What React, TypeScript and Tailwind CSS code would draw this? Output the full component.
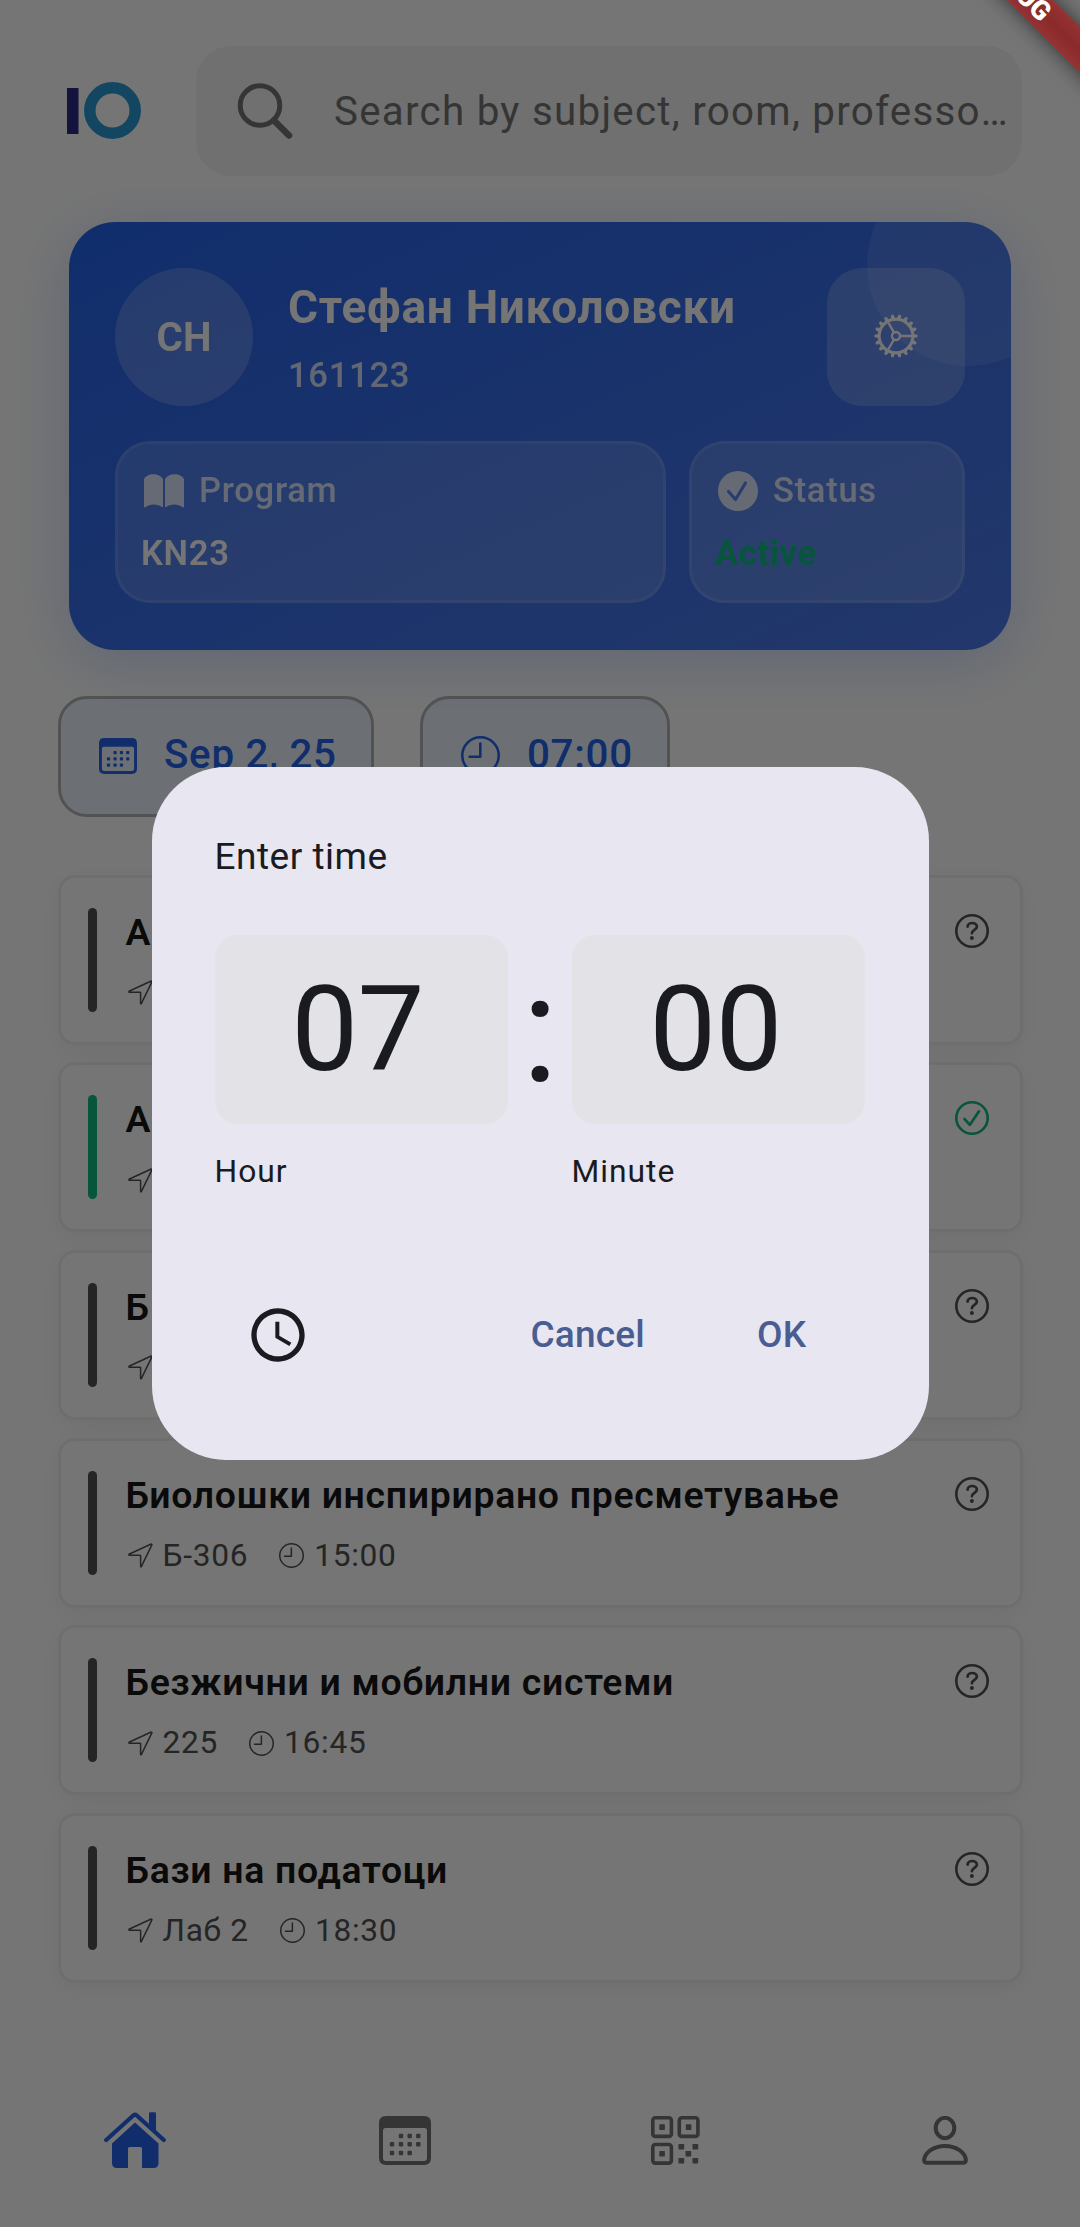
import React from "react";
import { MdOutlineAccessTime } from "react-icons/md";

type IconProps = { className?: string };

const ClockIcon = ({ className, stroke = 1.2 }: IconProps & { stroke?: number }) => (
  <svg viewBox="0 0 20 20" fill="none" stroke="currentColor" strokeWidth={stroke} className={className}>
    <circle cx="10" cy="10" r={10 - stroke / 2} />
    <path d="M9.9 3.9V10.6H4.4" strokeLinecap="round" strokeLinejoin="round" />
  </svg>
);

const ArrowIcon = ({ className }: IconProps) => (
  <svg viewBox="0 0 25 25" fill="none" stroke="currentColor" strokeWidth="1.500" strokeLinejoin="round" className={className}>
    <path d="M1 11.300 23.200 1 24 1.600 13.200 23.800 12.600 23.800V12.600L12.200 12.200H1Z" />
  </svg>
);

const CalendarIcon = ({ className }: IconProps) => (
  <svg viewBox="0 0 52 49" fill="currentColor" className={className}>
    <path
      fillRule="evenodd"
      d="M7 0H45Q52 0 52 7V42Q52 49 45 49H7Q0 49 0 42V7Q0 0 7 0ZM6.500 12Q4 12 4 14.500V42Q4 45 7 45H45Q48 45 48 42V14.500Q48 12 45.500 12Z"
    />
    {[
      [20, 18], [28.7, 18], [37.3, 18],
      [11, 26.3], [20, 26.3], [28.7, 26.3], [37.3, 26.3],
      [11, 35], [20, 35], [28.7, 35],
    ].map(([x, y]) => (
      <rect key={`${x}-${y}`} x={x - 0.2} y={y - 0.2} width="4.400" height="4.400" rx="1" />
    ))}
  </svg>
);

const GearIcon = ({ className }: IconProps) => (
  <svg viewBox="-22 -22 44 44" fill="none" stroke="currentColor" className={className}>
    <circle r="16.800" strokeWidth="2.900" />
    <circle r="4" strokeWidth="2.400" />
    {[0, 120, 240].map((a) => (
      <path key={a} d="M4.500 0H17" strokeWidth="2.300" transform={`rotate(${a})`} />
    ))}
    {Array.from({ length: 18 }, (_, i) => (
      <path key={i} d="M17.500 -2.300 21.600 -1.100V1.100L17.500 2.300Z" fill="currentColor" stroke="none" transform={`rotate(${i * 20})`} />
    ))}
  </svg>
);

const HomeIcon = ({ className }: IconProps) => (
  <svg viewBox="0 0 62 56" fill="currentColor" className={className}>
    <path d="M2.200 28 29.200 3.500Q31 2 32.800 3.500L59.800 28" fill="none" stroke="currentColor" strokeWidth="4.200" strokeLinecap="round" />
    <path d="M45 12V1.500Q45 .2 46.300 .2H50.700Q52 .2 52 1.500V20Z" />
    <path d="M31 10.500 54.500 31.500V51Q54.500 56 49.500 56H38V36.500Q38 35 36.500 35H25.500Q24 35 24 36.500V56H13Q8 56 8 51V31.500Z" />
  </svg>
);

const QrIcon = ({ className }: IconProps) => (
  <svg viewBox="0 0 49 49" fill="currentColor" className={className}>
    {[[0, 0], [26.5, 0], [0, 26.7]].map(([x, y]) => (
      <g key={`${x}-${y}`}>
        <rect x={x + 1.8} y={y + 1.8} width="18.600" height="18.600" rx="2.500" fill="none" stroke="currentColor" strokeWidth="3.600" />
        <rect x={x + 8.3} y={y + 8.3} width="5.600" height="5.600" rx=".6" />
      </g>
    ))}
    {[[27.5, 28], [41.5, 28], [34.5, 35], [27.5, 42], [41.5, 42]].map(([x, y]) => (
      <rect key={`${x}-${y}`} x={x} y={y} width="5.700" height="5.400" rx=".6" />
    ))}
  </svg>
);

const PersonIcon = ({ className }: IconProps) => (
  <svg viewBox="0 0 46 49" fill="none" stroke="currentColor" strokeWidth="4" className={className}>
    <ellipse cx="23" cy="12" rx="9.300" ry="10.200" />
    <path d="M5 46.800H41Q44 46.800 43.900 44C43 36.500 34.500 30 23 30S3 36.500 2.100 44Q2 46.800 5 46.800Z" />
  </svg>
);

const QuestionIcon = ({ className }: IconProps) => (
  <svg viewBox="0 0 34 34" fill="none" stroke="currentColor" strokeLinecap="round" strokeLinejoin="round" className={className}>
    <circle cx="17" cy="17" r="15.700" strokeWidth="2.600" />
    <path d="M12.600 12.600C12.900 7.800 22 7.800 21.900 12.800C21.800 15.800 16.900 16 16.900 19.200" strokeWidth="2.700" />
    <circle cx="16.900" cy="23.900" r="2" fill="currentColor" stroke="none" />
  </svg>
);

const CheckIcon = ({ className }: IconProps) => (
  <svg viewBox="0 0 34 34" fill="none" stroke="currentColor" strokeLinecap="round" strokeLinejoin="round" className={className}>
    <circle cx="17" cy="17" r="15.700" strokeWidth="2.600" />
    <path d="M9.500 18 14.900 23.800 24 10.300" strokeWidth="2.700" />
  </svg>
);

const CheckFilledIcon = ({ className }: IconProps) => (
  <svg viewBox="0 0 40 40" fill="currentColor" className={className}>
    <mask id="check-cut">
      <rect width="40" height="40" fill="white" />
      <path d="M10.500 20.500 17.500 28.500 27.500 12" fill="none" stroke="black" strokeWidth="3.200" strokeLinecap="round" strokeLinejoin="round" />
    </mask>
    <circle cx="20" cy="20" r="20" mask="url(#check-cut)" />
  </svg>
);

const BookIcon = ({ className }: IconProps) => (
  <svg viewBox="0 0 40 34" fill="currentColor" className={className}>
    <path d="M0 5C3-1.500 15.500-1.500 19 5V32.500Q19 33.800 18 33C14 29.500 5.500 29.500 1.800 33Q0 34 0 32.500Z" />
    <path d="M21 5C24.500-1.500 37-1.500 40 5V32.500Q40 34 38.200 33C34.500 29.500 26 29.500 22 33Q21 33.800 21 32.500Z" />
  </svg>
);

type Slot = { title: string; room: string; time: string; booked?: boolean };

const slots: Slot[] = [
  { title: "А", room: "", time: "" },
  { title: "А", room: "", time: "", booked: true },
  { title: "Б", room: "", time: "" },
  { title: "Биолошки инспирирано пресметување", room: "Б-306", time: "15:00" },
  { title: "Безжични и мобилни системи", room: "225", time: "16:45" },
  { title: "Бази на податоци", room: "Лаб 2", time: "18:30" },
];

const SlotCard = ({ slot }: { slot: Slot }) => (
  <div className="flex h-[170px] shrink-0 items-center rounded-[17px] border-[3px] border-[#efefef] bg-white pr-[31px] pl-[27px] shadow-[0_6px_23px_rgba(0,0,0,0.05)]">
    <div className={`h-[104px] w-[9px] rounded-full ${slot.booked ? "bg-[#10b981]" : "bg-[#525252]"}`} />
    <div className="ml-[29px] flex h-[104px] flex-1 flex-col">
      <div className="h-[48px] text-[37.400px] leading-[48px] font-semibold tracking-[0.700px] whitespace-nowrap text-[#171717]">{slot.title}</div>
      <div className="mt-[18px] flex h-[38px] items-center text-[31.700px] leading-[38px] tracking-[0.700px] text-[#525252]">
        <ArrowIcon className="ml-[2px] h-[25px] w-[25px]" />
        {slot.room && <span className="ml-[10px]">{slot.room}</span>}
        {slot.time && <ClockIcon className="ml-[31px] h-[25px] w-[25px]" />}
        <span className="ml-[10px]">{slot.time}</span>
      </div>
    </div>
    {slot.booked ? (
      <CheckIcon className="mb-[58px] h-[34px] w-[34px] text-[#10b981]" />
    ) : (
      <QuestionIcon className="mb-[58px] h-[34px] w-[34px] text-[#525252]" />
    )}
  </div>
);

const ProfileCard = () => (
  <section className="relative mx-[69px] mt-[46px] h-[428px] overflow-hidden rounded-[46px] bg-linear-to-br from-[#2563eb] to-[#4b7aea] p-[46px] text-white">
    <div className="absolute -top-[58px] -right-[58px] h-[202px] w-[202px] rounded-full bg-white/10" />
    <div className="relative flex h-[138px]">
      <div className="flex h-[138px] w-[138px] items-center justify-center rounded-full bg-white/20 pt-[2px] text-[40.300px] font-bold">СН</div>
      <div className="ml-[35px] flex flex-1 flex-col pt-[10px]">
        <div className="h-[58px] text-[46px] leading-[58px] font-bold tracking-[0.720px] whitespace-nowrap">Стефан Николовски</div>
        <div className="mt-[17px] h-[44px] text-[34.600px] leading-[44px] font-medium tracking-[0.700px] text-white/80">161123</div>
      </div>
      <div className="flex h-[138px] w-[138px] items-center justify-center rounded-[35px] bg-white/20 pb-[2px]">
        <GearIcon className="h-[44px] w-[44px]" />
      </div>
    </div>
    <div className="relative mt-[35px] flex gap-[23px]">
      <div className="h-[162px] w-[551px] rounded-[35px] border-[3px] border-white/10 bg-white/15 pt-[25px] pl-[23px]">
        <div className="flex h-[44px] items-center text-[34.600px] font-medium tracking-[0.700px] text-white/80">
          <BookIcon className="ml-[3px] h-[34px] w-[40px]" />
          <span className="ml-[15px]">Program</span>
        </div>
        <div className="mt-[18px] text-[34.600px] leading-[44px] font-semibold tracking-[0.700px]">KN23</div>
      </div>
      <div className="h-[162px] flex-1 rounded-[35px] border-[3px] border-white/10 bg-white/15 pt-[25px] pl-[23px]">
        <div className="flex h-[44px] items-center text-[34.600px] font-medium tracking-[0.700px] text-white/80">
          <CheckFilledIcon className="ml-[3px] h-[40px] w-[40px]" />
          <span className="ml-[15px]">Status</span>
        </div>
        <div className="mt-[18px] text-[34.600px] leading-[44px] font-bold tracking-[0.600px] text-[#10b981]">Active</div>
      </div>
    </div>
  </section>
);

const TimeDialog = () => (
  <div className="flex h-[693px] w-[777px] flex-col rounded-[74px] bg-[#e8e6f0] px-[63px] pt-[69px] text-[#1a1b20]">
    <div className="h-[42px] text-[37px] leading-[42px] tracking-[0.500px]">Enter time</div>
    <div className="mt-[57px] flex h-[189px] items-center justify-between">
      <div className="flex h-[189px] w-[293px] items-center justify-center rounded-[23px] bg-[#e3e2e6] pr-[7px] text-[119.200px] tracking-[-0.700px]">07</div>
      <div className="text-[151px] leading-[189px]">:</div>
      <div className="flex h-[189px] w-[293px] items-center justify-center rounded-[23px] bg-[#e3e2e6] pr-[7px] text-[119.200px] tracking-[-0.700px]">00</div>
    </div>
    <div className="mt-[26px] grid grid-cols-[357px_1fr] text-[31.800px] leading-[42px] tracking-[1px]">
      <span>Hour</span>
      <span>Minute</span>
    </div>
    <div className="mt-[111px] flex h-[64px] items-center text-[37px] font-medium tracking-[0.200px] text-[#495d92]">
      <MdOutlineAccessTime className="ml-[31px] h-[64px] w-[64px] text-[#1a1b20]" />
      <span className="ml-[221px]">Cancel</span>
      <span className="ml-[112px]">OK</span>
    </div>
  </div>
);

export default function App() {
  return (
    <div className="relative flex h-[2227px] w-[1080px] flex-col overflow-hidden bg-white font-['Roboto','Noto_Sans',sans-serif]">
      <header className="flex h-[176px] shrink-0 items-end pr-[58px] pl-[67px]">
        <svg viewBox="0 0 75 130" className="h-[130px] w-[75px]">
          <rect x="0" y="42" width="11.500" height="46" fill="#2b2a86" />
          <circle cx="45.500" cy="64.500" r="22.700" fill="none" stroke="#2999d3" strokeWidth="11.500" />
        </svg>
        <div className="ml-[54px] flex h-[130px] flex-1 items-center rounded-[35px] bg-[#f5f5f5] pl-[41px] text-[#737373]">
          <svg viewBox="0 0 56 56" fill="none" stroke="currentColor" className="h-[56px] w-[56px] shrink-0">
            <circle cx="23" cy="22.500" r="19.800" strokeWidth="5" />
            <path d="M37 37.500 52 52.500" strokeWidth="6.500" strokeLinecap="round" />
          </svg>
          <span className="mt-[2px] ml-[41px] text-[40.300px] tracking-[1.270px] whitespace-nowrap">Search by subject, room, professo…</span>
        </div>
      </header>
      <div className="shrink-0 drop-shadow-[0_12px_29px_rgba(37,99,235,0.22)]">
        <ProfileCard />
      </div>
      <div className="mt-[46px] flex shrink-0 gap-[46px] pl-[58px] text-[40.300px] font-medium tracking-[0.700px] text-[#2563eb]">
        <div className="flex h-[121px] w-[316px] items-center rounded-[29px] border-[3px] border-[#b4b4b4] bg-[#ecf4fe] pb-[2px] pl-[38px]">
          <CalendarIcon className="h-[36px] w-[38px]" />
          <span className="ml-[27px]">Sep 2, 25</span>
        </div>
        <div className="flex h-[121px] w-[250px] items-center rounded-[29px] border-[3px] border-[#b4b4b4] bg-[#ecf4fe] pb-[2px] pl-[38px]">
          <ClockIcon stroke={1.300} className="h-[39px] w-[39px]" />
          <span className="ml-[27px]">07:00</span>
        </div>
      </div>
      <main className="mt-[57.500px] flex shrink-0 flex-col gap-[17.700px] px-[57.500px]">
        {slots.map((slot, i) => (
          <SlotCard key={i} slot={slot} />
        ))}
      </main>
      <nav className="mt-auto grid h-[174px] shrink-0 grid-cols-4 items-center justify-items-center text-[#737373]">
        <HomeIcon className="h-[56px] w-[62px] text-[#2563eb]" />
        <CalendarIcon className="h-[49px] w-[52px]" />
        <QrIcon className="h-[49px] w-[49px]" />
        <PersonIcon className="h-[49px] w-[46px]" />
      </nav>
      <div className="absolute inset-0 flex items-center justify-center bg-black/54">
        <TimeDialog />
      </div>
      <div className="absolute top-[-30px] right-[-76px] flex h-[32px] w-[280px] rotate-45 items-center justify-center bg-linear-to-b from-[#963233] via-[#892a2b] to-[#963233] text-[27px] font-black text-white shadow-[0_0_20px_rgba(0,0,0,0.6)]">
        DEBUG
      </div>
    </div>
  );
}
